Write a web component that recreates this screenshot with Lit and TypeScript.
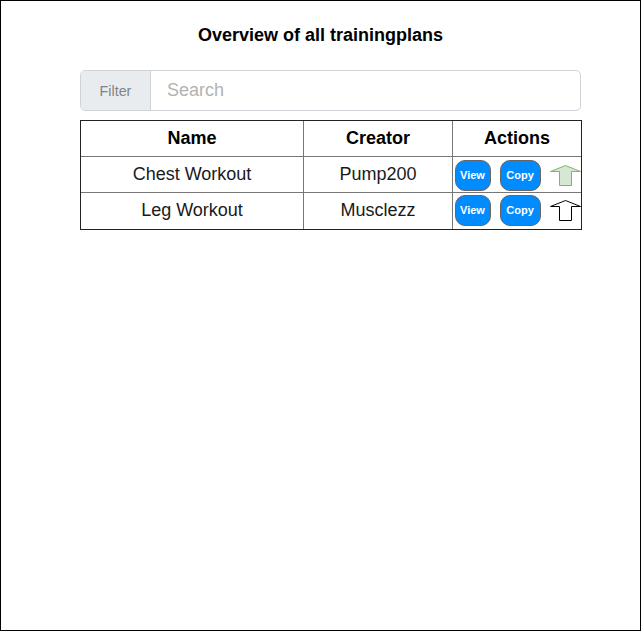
import { LitElement, html, svg, css } from "lit";
import { customElement, property } from "lit/decorators.js";
import { classMap } from "lit/directives/class-map.js";

interface Plan {
  name: string;
  creator: string;
  upvoted: boolean;
}

@customElement("vote-arrow")
class VoteArrow extends LitElement {
  @property({ type: Boolean }) active = false;

  static styles = css`
    :host { display: block; flex: none; width: 32px; height: 23px; }
    svg { display: block; overflow: visible; }
    .shape { fill: #fff; stroke: #000; stroke-width: 1; }
    .shape.active { fill: #d5e8d4; stroke: #82b366; }
  `;

  render() {
    return html`<svg width="32" height="23" viewBox="0 0 32 23">
      ${svg`<path class=${classMap({ shape: true, active: this.active })}
        d="M9.5 21.5V7.5H0.5L15.5 1.5L30.5 7.5H21.5V21.5Z" />`}
    </svg>`;
  }
}

@customElement("app-root")
class AppRoot extends LitElement {
  private plans: Plan[] = [
    { name: "Chest Workout", creator: "Pump200", upvoted: true },
    { name: "Leg Workout", creator: "Musclezz", upvoted: false },
  ];

  static styles = css`
    :host {
      display: block;
      box-sizing: border-box;
      width: 641px;
      height: 631px;
      border: 1px solid #000;
      background: #fff;
      font-family: "Liberation Sans", Arial, sans-serif;
      font-size: 18px;
      color: #1a1a1a;
    }
    * { box-sizing: border-box; }
    h1 {
      margin: 0;
      padding-top: 23px;
      height: 69px;
      font-size: 18px;
      line-height: 22px;
      text-align: center;
      color: #000;
    }
    .search {
      display: flex;
      width: 501px;
      height: 41px;
      margin-left: 79px;
      border: 1px solid #ced4da;
      border-radius: 5px;
      overflow: hidden;
      line-height: 39px;
    }
    .label {
      width: 70px;
      background: #e9ecef;
      border-right: 1px solid #ced4da;
      color: #808488;
      font-size: 14.3px;
      text-align: center;
      line-height: 40px;
    }
    .field { padding-left: 16px; color: #b3b3b3; }
    .table {
      display: grid;
      grid-template-columns: 223px 149px 128px;
      grid-auto-rows: 36px;
      width: 502px;
      margin: 9px 0 0 79px;
      border: 1px solid #222;
    }
    .cell {
      border-right: 1px solid #777;
      border-bottom: 1px solid #777;
      text-align: center;
      line-height: 34px;
    }
    .cell.end { border-right: 0; }
    .cell.last { border-bottom: 0; }
    .head { font-weight: bold; color: #000; }
    .actions { display: flex; padding: 3px 0 0 2px; }
    .actions.last { padding-top: 2px; }
    .btn {
      flex: none;
      height: 31px;
      padding-right: 1px;
      border: 1px solid #666;
      border-radius: 10px;
      background: #008cff;
      color: #fff;
      font-weight: bold;
      font-size: 11px;
      line-height: 29px;
      text-align: center;
    }
    .view { width: 36px; margin-right: 9px; }
    .copy { width: 41px; margin-right: 9px; }
    vote-arrow { margin-top: 4px; }
  `;

  render() {
    return html`
      <h1>Overview of all trainingplans</h1>
      <div class="search">
        <div class="label">Filter</div>
        <div class="field">Search</div>
      </div>
      <div class="table">
        <div class="cell head">Name</div>
        <div class="cell head">Creator</div>
        <div class="cell head end">Actions</div>
        ${this.plans.map((plan, i) => {
          const last = i === this.plans.length - 1;
          return html`
            <div class=${classMap({ cell: true, last })}>${plan.name}</div>
            <div class=${classMap({ cell: true, last })}>${plan.creator}</div>
            <div class=${classMap({ cell: true, end: true, actions: true, last })}>
              <div class="btn view">View</div>
              <div class="btn copy">Copy</div>
              <vote-arrow ?active=${plan.upvoted}></vote-arrow>
            </div>
          `;
        })}
      </div>
    `;
  }
}
